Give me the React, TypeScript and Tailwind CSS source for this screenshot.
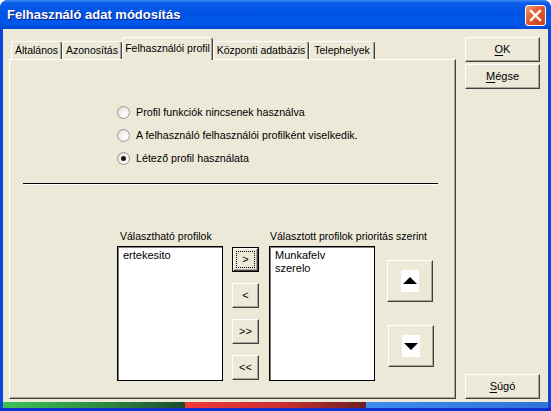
import type { ReactNode } from 'react';
import clsx from 'clsx';

/** Classic raised 3D push button */
function Btn({
  className,
  children,
  focused,
}: {
  className?: string;
  children: ReactNode;
  focused?: boolean;
}) {
  if (focused) {
    return (
      <div className={clsx('border border-black bg-[#ECE9D8]', className)}>
        <div className="h-full w-full border border-t-white border-l-white border-r-[#404040] border-b-[#404040] shadow-[inset_-1px_-1px_0_#ACA899] p-[2px]">
          <div className="h-full w-full flex items-center justify-center border border-dotted border-black text-[11px] leading-none">
            {children}
          </div>
        </div>
      </div>
    );
  }
  return (
    <div
      className={clsx(
        'flex items-center justify-center bg-[#ECE9D8] text-[11px] leading-none text-black border border-t-white border-l-white border-r-[#404040] border-b-[#404040] shadow-[inset_-1px_-1px_0_#ACA899]',
        className,
      )}
    >
      {children}
    </div>
  );
}

function Radio({ label, checked }: { label: string; checked?: boolean }) {
  return (
    <div className="h-[23px] flex items-center">
      <div className="w-[13px] h-[13px] rounded-full border border-[#9C9A94] bg-[radial-gradient(circle_at_65%_65%,#FFFFFF_0%,#F2F1EC_45%,#D6D4CB_100%)] flex items-center justify-center">
        {checked && <div className="w-[5px] h-[5px] rounded-full bg-[#1A1A1A]" />}
      </div>
      <span className="ml-[6px] text-[10.7px] leading-none">{label}</span>
    </div>
  );
}

function ListBox({ items }: { items: string[] }) {
  return (
    <div className="h-[135px] bg-white border border-black shadow-[inset_1px_1px_0_#808080] pt-[2px] pl-[5px]">
      {items.map((it) => (
        <div key={it} className="text-[11px] leading-[13px] text-black">
          {it}
        </div>
      ))}
    </div>
  );
}

const tabs = [
  { label: 'Általános', cls: 'w-[51px]' },
  { label: 'Azonosítás', cls: 'w-[60px]' },
  { label: 'Felhasználói profil', cls: 'w-[91px]', active: true },
  { label: 'Központi adatbázis', cls: 'w-[96px]' },
  { label: 'Telephelyek', cls: 'w-[66px]' },
];

export default function App() {
  return (
    <div className="w-[551px] h-[411px] flex flex-col bg-[#0A48DC] rounded-t-[8px] overflow-hidden font-['Liberation_Sans',Arial,sans-serif] text-black select-none">
      {/* Title bar */}
      <div className="h-[29px] flex items-start justify-between bg-[linear-gradient(to_bottom,#3C8EF6_0%,#0A5DE8_10%,#0054E3_45%,#0058EB_80%,#0048D4_100%)] pl-[7px] pr-[5px]">
        <span className="mt-[7px] text-white font-bold text-[13px] leading-[16px] [text-shadow:1px_1px_0_#0A1E8A]">
          Felhasználó adat módosítás
        </span>
        <div className="mt-[5px] w-[21px] h-[21px] rounded-[3px] border border-white bg-[linear-gradient(135deg,#F29A78_0%,#E5582F_45%,#CC3F17_100%)] flex items-center justify-center">
          <svg width="13" height="13" viewBox="0 0 13 13">
            <path d="M2 2 L11 11 M11 2 L2 11" stroke="white" strokeWidth="2.4" strokeLinecap="square" />
          </svg>
        </div>
      </div>

      {/* Client area */}
      <div className="flex-1 mx-[3px] bg-[#ECE9D8] flex pt-[8px] pl-[6px] pb-[3px]">
        {/* Tab control */}
        <div className="w-[447px] flex flex-col">
          <div className="h-[22px] flex items-end pl-[2px]">
            {tabs.map((t) =>
              t.active ? (
                <div
                  key={t.label}
                  className={clsx(
                    t.cls,
                    'h-[23px] -mb-px relative z-10 bg-[#ECE9D8] border-l border-t border-white border-r border-r-[#404040] rounded-t-[3px] shadow-[inset_-1px_0_0_#ACA899] flex items-start justify-center pt-[4px] text-[10.5px] leading-[13px] whitespace-nowrap',
                  )}
                >
                  {t.label}
                </div>
              ) : (
                <div
                  key={t.label}
                  className={clsx(
                    t.cls,
                    'h-[18px] border-l border-t border-white border-r border-r-[#404040] rounded-t-[3px] shadow-[inset_-1px_0_0_#ACA899] flex items-center justify-center text-[10.5px] leading-[13px] whitespace-nowrap',
                  )}
                >
                  {t.label}
                </div>
              ),
            )}
          </div>

          {/* Panel */}
          <div className="flex-1 flex flex-col border border-t-white border-l-white border-r-[#404040] border-b-[#404040] shadow-[inset_-1px_-1px_0_#ACA899]">
            <div className="ml-[107px] mt-[41px] flex flex-col">
              <Radio label="Profil funkciók nincsenek használva" />
              <Radio label="A felhasználó felhasználói profilként viselkedik." />
              <Radio label="Létező profil használata" checked />
            </div>

            <div className="ml-[13px] mt-[13px] w-[415px] border-t border-t-black border-b border-b-white" />

            <div className="ml-[107px] mt-[44px] flex items-start">
              <div className="w-[106px] flex flex-col">
                <div className="h-[17px] text-[10.5px] leading-[14px] whitespace-nowrap pl-[3px]">
                  Választható profilok
                </div>
                <ListBox items={['ertekesito']} />
              </div>

              <div className="ml-[9px] w-[27px] flex flex-col pt-[18px] gap-[11px]">
                <Btn focused className="h-[25px]">&gt;</Btn>
                <Btn className="h-[25px]">&lt;</Btn>
                <Btn className="h-[25px]">&gt;&gt;</Btn>
                <Btn className="h-[25px]">&lt;&lt;</Btn>
              </div>

              <div className="ml-[10px] w-[106px] flex flex-col">
                <div className="h-[17px] text-[10.5px] leading-[14px] whitespace-nowrap pl-[1px]">
                  Választott profilok prioritás szerint
                </div>
                <ListBox items={['Munkafelv', 'szerelo']} />
              </div>

              <div className="ml-[12px] flex flex-col pt-[31px]">
                <Btn className="w-[46px] h-[42px]">
                  <svg width="18" height="22" viewBox="0 0 18 22">
                    <rect width="18" height="22" fill="white" />
                    <polygon points="2,14 16,14 9,7" fill="black" />
                  </svg>
                </Btn>
                <Btn className="mt-[23px] ml-[1px] w-[46px] h-[42px]">
                  <svg width="18" height="22" viewBox="0 0 18 22">
                    <rect width="18" height="22" fill="white" />
                    <polygon points="2,8 16,8 9,15" fill="black" />
                  </svg>
                </Btn>
              </div>
            </div>
          </div>
        </div>

        {/* Right buttons */}
        <div className="ml-[9px] w-[75px] flex flex-col">
          <Btn className="h-[25px]">
            <span className="underline underline-offset-[2px]">O</span>K
          </Btn>
          <Btn className="mt-[2px] h-[25px]">
            <span className="underline underline-offset-[2px]">M</span>égse
          </Btn>
          <Btn className="mt-auto h-[25px]">
            <span className="underline underline-offset-[2px]">S</span>úgó
          </Btn>
        </div>
      </div>

      {/* Bottom strip */}
      <div className="h-[6px] mx-[3px] flex">
        <div className="w-[182px] bg-[linear-gradient(to_right,#3CC356,#2E8A40_55%,#1E4A2E)]" />
        <div className="w-[181px] bg-[linear-gradient(to_right,#F23A3A,#C83030_55%,#6E1F22)]" />
        <div className="flex-1 bg-[linear-gradient(to_right,#3C8CEC,#2F74D8)]" />
      </div>
      <div className="h-[3px] bg-[#0A2ED0]" />
    </div>
  );
}
